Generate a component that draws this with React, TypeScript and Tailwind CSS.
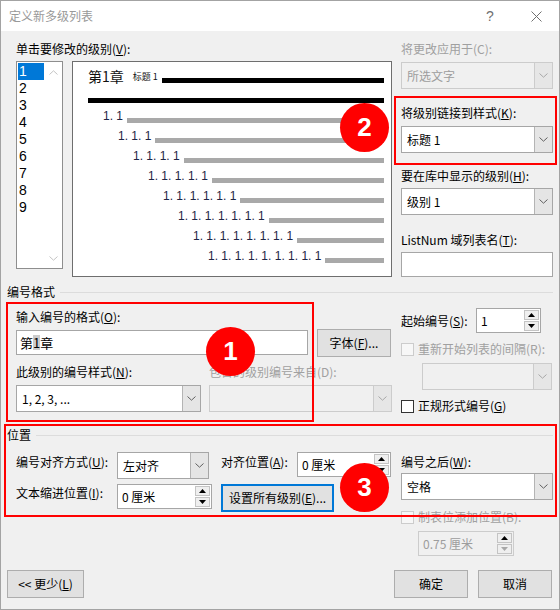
import type { ReactNode } from 'react';

// Level preview rows (levels 2..9), indent per level is 15px
const previewRows = [
  { text: '1. 1', indent: 'ml-[15px]' },
  { text: '1. 1. 1', indent: 'ml-[30px]' },
  { text: '1. 1. 1. 1', indent: 'ml-[45px]' },
  { text: '1. 1. 1. 1. 1', indent: 'ml-[60px]' },
  { text: '1. 1. 1. 1. 1. 1', indent: 'ml-[75px]' },
  { text: '1. 1. 1. 1. 1. 1. 1', indent: 'ml-[90px]' },
  { text: '1. 1. 1. 1. 1. 1. 1. 1', indent: 'ml-[105px]' },
  { text: '1. 1. 1. 1. 1. 1. 1. 1. 1', indent: 'ml-[120px]' },
];

const levels = [1, 2, 3, 4, 5, 6, 7, 8, 9];

function Chevron({ color = '#606060', up = false }: { color?: string; up?: boolean }) {
  return (
    <svg width="9" height="5" viewBox="0 0 9 5">
      <path d={up ? 'M0.5 4.5 L4.5 0.8 L8.5 4.5' : 'M0.5 0.5 L4.5 4.2 L8.5 0.5'} fill="none" stroke={color} strokeWidth="1" />
    </svg>
  );
}

function Triangle({ up, color = '#000' }: { up?: boolean; color?: string }) {
  return (
    <svg width="7" height="4" viewBox="0 0 7 4">
      <polygon points={up ? '0,4 3.5,0 7,4' : '0,0 7,0 3.5,4'} fill={color} />
    </svg>
  );
}

function Label({ children, disabled, className = '' }: { children: ReactNode; disabled?: boolean; className?: string }) {
  return (
    <div className={`h-[16px] leading-[16px] text-[12px] whitespace-nowrap ${disabled ? 'text-[#a0a0a0]' : 'text-black'} ${className}`}>
      {children}
    </div>
  );
}

function ComboBox({ value, disabled, className = '' }: { value?: string; disabled?: boolean; className?: string }) {
  return (
    <div className={`flex border ${disabled ? 'border-[#cccccc] bg-[#f0f0f0]' : 'border-[#a6a6a6] bg-white'} ${className}`}>
      <div className={`flex-1 flex items-center pl-[5px] text-[12px] whitespace-nowrap ${disabled ? 'text-[#9d9d9d]' : 'text-black'}`}>
        {value}
      </div>
      <div className={`w-[18px] flex items-center justify-center border-l ${disabled ? 'border-[#cccccc] bg-[#e6e6e6]' : 'border-[#b4b4b4] bg-[#e5e5e5]'}`}>
        <Chevron color={disabled ? '#a8a8a8' : '#606060'} />
      </div>
    </div>
  );
}

function SpinBox({ value, disabled, className = '' }: { value: string; disabled?: boolean; className?: string }) {
  return (
    <div className={`flex border ${disabled ? 'border-[#cccccc] bg-[#f0f0f0]' : 'border-[#a6a6a6] bg-white'} ${className}`}>
      <div className={`flex-1 flex items-center pl-[4px] text-[12px] whitespace-nowrap ${disabled ? 'text-[#9d9d9d]' : 'text-black'}`}>
        {value}
      </div>
      <div className="w-[17px] flex flex-col p-[1px] gap-[1px]">
        <div className="flex-1 flex items-center justify-center bg-[#efefef] border border-[#c4c4c4]">
          <Triangle up />
        </div>
        <div className="flex-1 flex items-center justify-center bg-[#efefef] border border-[#c4c4c4]">
          <Triangle color={disabled ? '#a8a8a8' : '#000'} />
        </div>
      </div>
    </div>
  );
}

function CheckRow({ children, disabled, className = '' }: { children: ReactNode; disabled?: boolean; className?: string }) {
  return (
    <div className={`flex items-center h-[16px] ${className}`}>
      <div className={`w-[13px] h-[13px] border ${disabled ? 'border-[#cccccc] bg-[#f7f7f7]' : 'border-[#333333] bg-white'}`} />
      <Label disabled={disabled} className="ml-[4px]">
        {children}
      </Label>
    </div>
  );
}

function Button({ children, focused, className = '' }: { children: ReactNode; focused?: boolean; className?: string }) {
  return (
    <button
      type="button"
      className={`flex items-center justify-center bg-[#e1e1e1] text-[12px] text-black whitespace-nowrap ${
        focused ? 'border-2 border-[#0078d7]' : 'border border-[#adadad]'
      } ${className}`}
    >
      {children}
    </button>
  );
}

function GroupHeader({ title, className = '' }: { title: string; className?: string }) {
  return (
    <div className={`flex items-center h-[16px] ${className}`}>
      <Label className="ml-[6px]">{title}</Label>
      <div className="flex-1 ml-[5px] mr-[6px] h-px bg-[#dcdcdc]" />
    </div>
  );
}

function Badge({ n, className }: { n: number; className: string }) {
  return (
    <div
      className={`absolute w-[49px] h-[49px] rounded-full bg-[#ff0000] flex items-center justify-center text-white text-[26px] font-bold [font-family:'Liberation_Sans',Arial,sans-serif] ${className}`}
    >
      {n}
    </div>
  );
}

export default function App() {
  return (
    <div className="relative w-[560px] h-[610px] border border-[#a3a3a3] bg-[#f0f0f0] flex flex-col overflow-hidden [font-family:'Noto_Sans_CJK_SC','Microsoft_YaHei',sans-serif]">
      {/* Title bar */}
      <div className="h-[30px] shrink-0 bg-white flex items-center">
        <span className="flex-1 pl-[8px] text-[12px] text-[#999999]">定义新多级列表</span>
        <div className="w-[46px] h-full flex items-center justify-center text-[14px] text-[#707070] [font-family:'Liberation_Sans',sans-serif]">
          ?
        </div>
        <div className="w-[46px] h-full flex items-center justify-center">
          <svg width="11" height="11" viewBox="0 0 11 11">
            <path d="M0.5 0.5 L10.5 10.5 M10.5 0.5 L0.5 10.5" stroke="#707070" strokeWidth="1" />
          </svg>
        </div>
      </div>

      {/* Levels + preview + link options */}
      <div className="flex mt-[10px]">
        <div className="ml-[15px] flex flex-col">
          <Label>
            单击要修改的级别(<u>V</u>):
          </Label>
          <div className="flex mt-[4px]">
            <div className="w-[47px] h-[208px] border border-[#8e8e8e] bg-white flex">
              <div className="w-[26px] ml-[1px] mt-[1px] flex flex-col">
                {levels.map((n) => (
                  <div
                    key={n}
                    className={`h-[17px] flex items-center pl-[1px] ${n === 1 ? 'bg-[#0078d7] text-white' : 'text-black'}`}
                  >
                    <span className="text-[14px] leading-[15px] [font-family:'Liberation_Sans',Arial,sans-serif]">{n}</span>
                  </div>
                ))}
              </div>
              <div className="flex-1 flex flex-col items-center justify-between pt-[8px] pb-[7px]">
                <Chevron up color="#c4c4c4" />
                <Chevron color="#c4c4c4" />
              </div>
            </div>

            <div className="ml-[9px] w-[320px] h-[216px] border border-[#6e6e6e] bg-white flex flex-col pt-[6px] pl-[15px] pr-[7px]">
              <div className="h-[20px] flex items-end">
                <span className="text-[14px] leading-[16px] mb-[4px] text-[#111]">第1章</span>
                <span className="ml-[9px] text-[9px] leading-[12px] mb-[5px] text-[#111]">标题 1</span>
                <div className="flex-1 ml-[4px] h-[5px] mb-[5px] bg-black" />
              </div>
              <div className="h-[20px] flex items-end">
                <div className="flex-1 h-[5px] mb-[5px] bg-black" />
              </div>
              {previewRows.map((row) => (
                <div key={row.text} className="h-[20px] flex items-end">
                  <span
                    className={`${row.indent} text-[12px] leading-[14px] mb-[5px] whitespace-nowrap text-[#1e2545] [font-family:'Liberation_Sans',Arial,sans-serif]`}
                  >
                    {row.text}
                  </span>
                  <div className="flex-1 ml-[4px] h-[5px] mb-[5px] bg-[#a9a9a9]" />
                </div>
              ))}
            </div>
          </div>
        </div>

        <div className="ml-[9px] w-[152px] flex flex-col">
          <Label disabled>将更改应用于(C):</Label>
          <ComboBox value="所选文字" disabled className="mt-[5px] h-[27px]" />
          <Label className="mt-[16px]">
            将级别链接到样式(<u>K</u>):
          </Label>
          <ComboBox value="标题 1" className="mt-[5px] h-[27px]" />
          <Label className="mt-[15px]">
            要在库中显示的级别(<u>H</u>):
          </Label>
          <ComboBox value="级别 1" className="mt-[4px] h-[27px]" />
          <Label className="mt-[17px]">
            ListNum 域列表名(<u>T</u>):
          </Label>
          <div className="mt-[4px] h-[25px] border border-[#a6a6a6] bg-white" />
        </div>
      </div>

      {/* 编号格式 */}
      <GroupHeader title="编号格式" className="mt-[7px]" />
      <div className="flex">
        <div className="ml-[15px] w-[376px] flex flex-col">
          <Label className="mt-[9px]">
            输入编号的格式(<u>O</u>):
          </Label>
          <div className="flex items-start mt-[4px]">
            <div className="mt-[1px] w-[292px] h-[25px] border border-[#a6a6a6] bg-white flex items-center pl-[3px] text-[13px]">
              <span>第</span>
              <span className="bg-[#cccccc] leading-[15px]">1</span>
              <span>章</span>
            </div>
            <Button className="ml-[9px] w-[74px] h-[28px]">
              字体(<u>F</u>)...
            </Button>
          </div>
          <div className="flex mt-[7px]">
            <Label className="w-[193px]">
              此级别的编号样式(<u>N</u>):
            </Label>
            <Label disabled>包含的级别编号来自(D):</Label>
          </div>
          <div className="flex mt-[5px]">
            <ComboBox value="1, 2, 3, ..." className="w-[185px] h-[27px]" />
            <ComboBox disabled className="ml-[8px] w-[183px] h-[27px]" />
          </div>
        </div>

        <div className="ml-[9px] w-[152px] flex flex-col">
          <div className="flex items-center mt-[8px] h-[25px]">
            <Label className="w-[75px]">
              起始编号(<u>S</u>):
            </Label>
            <SpinBox value="1" className="w-[65px] h-[25px]" />
          </div>
          <CheckRow disabled className="mt-[8px]">
            重新开始列表的间隔(R):
          </CheckRow>
          <ComboBox disabled className="ml-[21px] mt-[6px] w-[130px] h-[27px]" />
          <CheckRow className="mt-[8px]">
            正规形式编号(<u>G</u>)
          </CheckRow>
        </div>
      </div>

      {/* 位置 */}
      <GroupHeader title="位置" className="mt-[13px]" />
      <div className="flex">
        <div className="ml-[15px] w-[376px] flex flex-col">
          <div className="flex items-start mt-[9px]">
            <Label className="w-[101px] mt-[2px]">
              编号对齐方式(<u>U</u>):
            </Label>
            <ComboBox value="左对齐" className="w-[92px] h-[27px]" />
            <Label className="ml-[12px] w-[76px] mt-[2px]">
              对齐位置(<u>A</u>):
            </Label>
            <SpinBox value="0 厘米" className="w-[94px] h-[25px]" />
          </div>
          <div className="flex items-start mt-[5px]">
            <Label className="w-[101px] mt-[1px]">
              文本缩进位置(<u>I</u>):
            </Label>
            <SpinBox value="0 厘米" className="w-[95px] h-[25px]" />
            <Button focused className="ml-[9px] w-[113px] h-[28px]">
              设置所有级别(<u>E</u>)...
            </Button>
          </div>
        </div>

        <div className="ml-[9px] w-[152px] flex flex-col">
          <Label className="mt-[11px]">
            编号之后(<u>W</u>):
          </Label>
          <ComboBox value="空格" className="mt-[3px] h-[27px]" />
          <CheckRow disabled className="mt-[9px]">
            制表位添加位置(B):
          </CheckRow>
          <SpinBox value="0.75 厘米" disabled className="ml-[17px] mt-[6px] w-[96px] h-[25px]" />
        </div>
      </div>

      {/* Dialog buttons */}
      <div className="flex mt-[14px]">
        <Button className="ml-[6px] w-[77px] h-[28px]">
          {'<< 更少('}
          <u>L</u>)
        </Button>
        <div className="flex-1" />
        <Button className="w-[74px] h-[28px]">确定</Button>
        <Button className="ml-[10px] mr-[7px] w-[74px] h-[28px]">取消</Button>
      </div>

      {/* Red annotation overlays */}
      <div className="absolute left-[5px] top-[301px] w-[308px] h-[120px] border-2 border-[#ff0000] pointer-events-none" />
      <div className="absolute left-[393px] top-[95px] w-[163px] h-[69px] border-2 border-[#ff0000] pointer-events-none" />
      <div className="absolute left-[3px] top-[423px] w-[553px] h-[93px] border-2 border-[#ff0000] pointer-events-none" />
      <Badge n={1} className="left-[205px] top-[326px]" />
      <Badge n={2} className="left-[339px] top-[102px]" />
      <Badge n={3} className="left-[339px] top-[462px]" />
    </div>
  );
}
